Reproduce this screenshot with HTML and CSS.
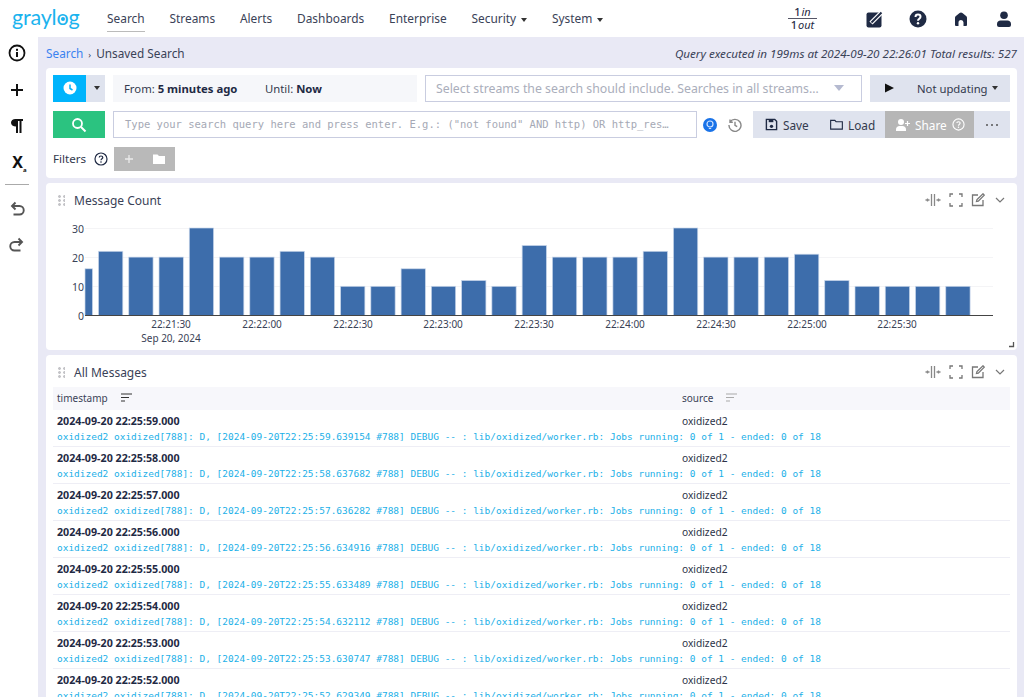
FILE: index.html
```html
<!DOCTYPE html>
<html lang="en">
<head>
<meta charset="utf-8">
<title>Graylog Search</title>
<link rel="stylesheet" href="styles.css">
</head>
<body>
<header class="navbar">
  <div class="logo">gray<span class="logo-l">l</span><span class="logo-o">o</span>g</div>
  <nav class="nav">
    <a class="nav-item active">Search</a>
    <a class="nav-item">Streams</a>
    <a class="nav-item">Alerts</a>
    <a class="nav-item">Dashboards</a>
    <a class="nav-item">Enterprise</a>
    <a class="nav-item drop">Security <i class="caret"></i></a>
    <a class="nav-item drop">System <i class="caret"></i></a>
  </nav>
  <div class="throughput"><div class="tp-top"><b>1</b> <em>in</em></div><div><b>1</b> <em>out</em></div></div>
  <div class="nav-icons">
    <svg class="nav-ic" viewBox="0 0 18 18"><rect x=".5" y="2.500" width="15" height="15" rx="2" fill="#1f2a44"/><path stroke="#fff" stroke-width="4.500" d="M5 13 15 3"/><path stroke="#1f2a44" stroke-width="2" d="M5.500 12.500 15.500 2.500"/></svg>
    <svg class="nav-ic" viewBox="0 0 18 18"><circle cx="9" cy="9" r="8.500" fill="#1f2a44"/><path fill="none" stroke="#fff" stroke-width="2" d="M6.500 7c0-1.500 1.100-2.400 2.500-2.400s2.500.9 2.500 2.200c0 1.900-2.500 1.900-2.500 3.900"/><circle cx="9" cy="13.300" r="1.200" fill="#fff"/></svg>
    <svg class="nav-ic" viewBox="0 0 18 18"><path fill="#1f2a44" d="M9 2.500c.6 0 1 .3 1.400.6l4 3.200c.4.400.6.800.6 1.400V15a1 1 0 0 1-1 1h-2.500v-3.500a2.500 2.500 0 0 0-5 0V16H4a1 1 0 0 1-1-1V7.700c0-.6.200-1 .6-1.400l4-3.200c.4-.3.800-.6 1.400-.6z"/></svg>
    <svg class="nav-ic" viewBox="0 0 18 18"><circle cx="9" cy="5.300" r="3.800" fill="#1f2a44"/><path fill="#1f2a44" d="M2 15v-1c0-2 1.500-3.500 3.500-3.500h7c2 0 3.500 1.500 3.500 3.500v1a2 2 0 0 1-2 2H4a2 2 0 0 1-2-2z"/></svg>
  </div>
</header>
<div class="app">
  <aside class="sidebar">
    <svg class="side-ic" viewBox="0 0 18 18"><circle cx="9" cy="9" r="7.500" fill="none" stroke="#111" stroke-width="1.800"/><rect x="8" y="8" width="2" height="5" fill="#111"/><rect x="8" y="4.800" width="2" height="2" fill="#111"/></svg>
    <svg class="side-ic" viewBox="0 0 18 18"><path stroke="#111" stroke-width="2" d="M9 3v12M3 9h12"/></svg>
    <svg class="side-ic" viewBox="0 0 18 18"><path fill="#111" d="M7.500 2H15v2h-1.500v12h-2V4H10v12H8v-6.500c-3 0-5-1.500-5-3.800S4.800 2 7.500 2z"/></svg>
    <div class="side-x">X<sub>a</sub></div>
    <div class="side-sep"></div>
    <svg class="side-ic hist" viewBox="0 0 18 18"><path fill="none" stroke="#555" stroke-width="1.900" d="M7.500 2.500 4 6l3.500 3.500M4 6h7.500a4 4 0 0 1 0 8.500H5.500"/></svg>
    <svg class="side-ic hist" viewBox="0 0 18 18"><path fill="none" stroke="#555" stroke-width="1.900" d="M10.500 2.500 14 6l-3.500 3.500M14 6H6.500a4 4 0 0 0 0 8.500h6"/></svg>
  </aside>
  <main class="content">
    <div class="crumbs">
      <div><a class="crumb-link">Search</a><span class="crumb-sep">›</span><span>Unsaved Search</span></div>
      <div class="exec">Query executed in 199ms at 2024-09-20 22:26:01 Total results: 527</div>
    </div>
    <section class="card search-card">
      <div class="row">
        <div class="time-btn">
          <span class="time-main"><svg class="ic14" viewBox="0 0 14 14"><circle cx="7" cy="7" r="6.500" fill="#fff"/><path fill="none" stroke="#00b4fc" stroke-width="1.500" d="M7 3.500V7.500l2.500 1.500"/></svg></span>
          <span class="time-drop"><i class="caret"></i></span>
        </div>
        <div class="range"><span class="from">From: <b>5 minutes ago</b></span><span>Until: <b>Now</b></span></div>
        <div class="streams"><span>Select streams the search should include. Searches in all streams…</span><i class="caret-big"></i></div>
        <div class="refresh"><svg class="play" viewBox="0 0 9 10"><path fill="#111" d="M0 .5 9 5 0 9.500z"/></svg><span>Not updating</span><i class="caret"></i></div>
      </div>
      <div class="row">
        <div class="go"><svg class="ic16" viewBox="0 0 16 16"><circle cx="6.500" cy="6.500" r="4.500" fill="none" stroke="#fff" stroke-width="1.800"/><path stroke="#fff" stroke-width="2" d="M10 10l4.500 4.500"/></svg></div>
        <div class="query">Type your search query here and press enter. E.g.: ("not found" AND http) OR http_res…</div>
        <div class="query-ics">
          <svg class="ic14" viewBox="0 0 14 14"><circle cx="7" cy="7" r="7" fill="#1a73e8"/><circle cx="7" cy="6" r="3" fill="none" stroke="#cfe3ff" stroke-width="1.200"/><path stroke="#cfe3ff" d="M5.800 10.500h2.400"/></svg>
          <svg class="ic14" viewBox="0 0 14 14"><path fill="none" stroke="#888" stroke-width="1.400" d="M2 4a6 6 0 1 1-1 3M2 1.500V4.300h2.800M7 3.800V7.300l2.200 1.400"/></svg>
        </div>
        <div class="actions">
          <span class="act act-save"><svg class="ic13" viewBox="0 0 14 14"><path fill="none" stroke="#1f2a44" stroke-width="1.500" d="M1.500 1.500h9l2 2v9h-11z"/><rect x="4" y="2" width="5" height="2.500" fill="#1f2a44"/><circle cx="7" cy="9" r="1.800" fill="#1f2a44"/></svg>Save</span>
          <span class="act act-load"><svg class="ic13" viewBox="0 0 14 14"><path fill="none" stroke="#1f2a44" stroke-width="1.200" d="M.7 2.500h4.500l1.300 1.500h6.800v8H.7z"/></svg>Load</span>
          <span class="act act-share"><svg class="ic14" viewBox="0 0 14 14"><circle cx="5" cy="4" r="3" fill="#fff"/><path fill="#fff" d="M0 13v-1.500C0 9.500 1.500 8 3.500 8h3C8.500 8 10 9.500 10 11.500V13z"/><path stroke="#fff" stroke-width="1.200" d="M11.500 3v5M9 5.500h5"/></svg>Share<svg class="ic13" viewBox="0 0 14 14"><circle cx="7" cy="7" r="6" fill="none" stroke="#fff" stroke-width="1.200"/><path fill="none" stroke="#fff" stroke-width="1.200" d="M5.200 5.500C5.200 4.500 6 4 7 4s1.800.5 1.800 1.500C8.800 6.800 7 6.800 7 8.300"/><circle cx="7" cy="10" r=".8" fill="#fff"/></svg></span>
          <span class="act act-more"><svg class="ic14" viewBox="0 0 14 14"><circle cx="2" cy="7" r="1" fill="#555"/><circle cx="7" cy="7" r="1" fill="#555"/><circle cx="12" cy="7" r="1" fill="#555"/></svg></span>
        </div>
      </div>
      <div class="row filters">
        <span class="filters-label">Filters</span>
        <svg class="ic14" viewBox="0 0 14 14"><circle cx="7" cy="7" r="6" fill="none" stroke="#1f2a44" stroke-width="1.200"/><path fill="none" stroke="#1f2a44" stroke-width="1.200" d="M5.200 5.500C5.200 4.500 6 4 7 4s1.800.5 1.800 1.500C8.800 6.800 7 6.800 7 8.300"/><circle cx="7" cy="10" r=".8" fill="#1f2a44"/></svg>
        <div class="filter-btns">
          <svg class="ic12" viewBox="0 0 12 12"><path stroke="#fff" stroke-opacity=".7" stroke-width="1.300" d="M6 2v8M2 6h8"/></svg>
          <svg class="ic12" viewBox="0 0 12 12"><path fill="#fff" d="M0 1.500h4.500L6 3h6v8H0z"/></svg>
        </div>
      </div>
    </section>
    <section class="card chart-card">
      <div class="widget-head">
        <span class="grip"></span><span class="widget-title">Message Count</span>
        <div class="widget-ics">
          <svg class="wi wi-c" viewBox="0 0 16 12"><path fill="none" stroke="#888" stroke-width="1.300" d="M6.500 0v12M9.500 0v12M.5 6h4M11.500 6h4M2.500 4.500v3M13.500 4.500v3"/></svg>
          <svg class="wi" viewBox="0 0 14 14"><path fill="none" stroke="#777" stroke-width="1.300" d="M1 4V1h3M10 1h3v3M13 10v3h-3M4 13H1v-3"/></svg>
          <svg class="wi" viewBox="0 0 14 14"><path fill="none" stroke="#777" stroke-width="1.300" d="M7 2H1.500v10.500H12V7M5.500 8.500l.5-2L12 .8l1.300 1.300-6 6z"/></svg>
          <svg class="wi wi-s" viewBox="0 0 12 12"><path fill="none" stroke="#777" stroke-width="1.200" d="M2 4l4 4 4-4"/></svg>
        </div>
      </div>
      <svg class="chart" viewBox="46 216 971 134" width="971" height="134">
        <g class="grid"><path d="M85 228.500H993M85 257.500H993M85 286.500H993"/></g>
        <g class="bars">
          <rect x="85" y="268.800" width="7.500" height="46.700"/>
          <rect x="98.500" y="251.300" width="24.300" height="64.200"/>
          <rect x="128.760" y="257.100" width="24.300" height="58.400"/>
          <rect x="159.020" y="257.100" width="24.300" height="58.400"/>
          <rect x="189.280" y="228" width="24.300" height="87.500"/>
          <rect x="219.540" y="257.100" width="24.300" height="58.400"/>
          <rect x="249.800" y="257.100" width="24.300" height="58.400"/>
          <rect x="280.060" y="251.300" width="24.300" height="64.200"/>
          <rect x="310.320" y="257.100" width="24.300" height="58.400"/>
          <rect x="340.580" y="286.300" width="24.300" height="29.200"/>
          <rect x="370.840" y="286.300" width="24.300" height="29.200"/>
          <rect x="401.100" y="268.800" width="24.300" height="46.700"/>
          <rect x="431.360" y="286.300" width="24.300" height="29.200"/>
          <rect x="461.620" y="280.500" width="24.300" height="35"/>
          <rect x="491.880" y="286.300" width="24.300" height="29.200"/>
          <rect x="522.140" y="245.500" width="24.300" height="70"/>
          <rect x="552.400" y="257.100" width="24.300" height="58.400"/>
          <rect x="582.660" y="257.100" width="24.300" height="58.400"/>
          <rect x="612.920" y="257.100" width="24.300" height="58.400"/>
          <rect x="643.180" y="251.300" width="24.300" height="64.200"/>
          <rect x="673.440" y="228" width="24.300" height="87.500"/>
          <rect x="703.700" y="257.100" width="24.300" height="58.400"/>
          <rect x="733.960" y="257.100" width="24.300" height="58.400"/>
          <rect x="764.220" y="257.100" width="24.300" height="58.400"/>
          <rect x="794.480" y="254.200" width="24.300" height="61.300"/>
          <rect x="824.740" y="280.500" width="24.300" height="35"/>
          <rect x="855" y="286.300" width="24.300" height="29.200"/>
          <rect x="885.260" y="286.300" width="24.300" height="29.200"/>
          <rect x="915.520" y="286.300" width="24.300" height="29.200"/>
          <rect x="945.780" y="286.300" width="24.300" height="29.200"/>
        </g>
        <path class="axis" d="M85 315.500H993"/>
        <g class="ylab">
          <text x="85" y="232.500">30</text><text x="85" y="261.500">20</text><text x="85" y="290.500">10</text><text x="85" y="319.500">0</text>
        </g>
        <g class="xlab">
          <text x="171" y="328">22:21:30</text><text x="262" y="328">22:22:00</text><text x="353" y="328">22:22:30</text><text x="443" y="328">22:23:00</text><text x="534" y="328">22:23:30</text><text x="625" y="328">22:24:00</text><text x="716" y="328">22:24:30</text><text x="807" y="328">22:25:00</text><text x="897" y="328">22:25:30</text>
          <text x="171" y="342">Sep 20, 2024</text>
        </g>
        <path class="resize" d="M1009 346.500h4.500v-4.500"/>
      </svg>
    </section>
    <section class="card msg-card">
      <div class="widget-head">
        <span class="grip"></span><span class="widget-title">All Messages</span>
        <div class="widget-ics">
          <svg class="wi wi-c" viewBox="0 0 16 12"><path fill="none" stroke="#888" stroke-width="1.300" d="M6.500 0v12M9.500 0v12M.5 6h4M11.500 6h4M2.500 4.500v3M13.500 4.500v3"/></svg>
          <svg class="wi" viewBox="0 0 14 14"><path fill="none" stroke="#777" stroke-width="1.300" d="M1 4V1h3M10 1h3v3M13 10v3h-3M4 13H1v-3"/></svg>
          <svg class="wi" viewBox="0 0 14 14"><path fill="none" stroke="#777" stroke-width="1.300" d="M7 2H1.500v10.500H12V7M5.500 8.500l.5-2L12 .8l1.300 1.300-6 6z"/></svg>
          <svg class="wi wi-s" viewBox="0 0 12 12"><path fill="none" stroke="#777" stroke-width="1.200" d="M2 4l4 4 4-4"/></svg>
        </div>
      </div>
      <div class="table">
        <div class="thead">
          <span class="th-ts">timestamp<svg class="sort" viewBox="0 0 12 10"><path stroke="#333" stroke-width="1.200" d="M0 1h11M0 4.500h8M0 8h4"/></svg></span>
          <span>source<svg class="sort" viewBox="0 0 12 10"><path stroke="#aaa" stroke-width="1.200" d="M0 1h11M0 4.500h8M0 8h4"/></svg></span>
        </div>
        <div class="msg"><div class="m-top"><b>2024-09-20 22:25:59.000</b><span>oxidized2</span></div><div class="m-body">oxidized2 oxidized[788]: D, [2024-09-20T22:25:59.639154 #788] DEBUG -- : lib/oxidized/worker.rb: Jobs running: 0 of 1 - ended: 0 of 18</div></div>
        <div class="msg"><div class="m-top"><b>2024-09-20 22:25:58.000</b><span>oxidized2</span></div><div class="m-body">oxidized2 oxidized[788]: D, [2024-09-20T22:25:58.637682 #788] DEBUG -- : lib/oxidized/worker.rb: Jobs running: 0 of 1 - ended: 0 of 18</div></div>
        <div class="msg"><div class="m-top"><b>2024-09-20 22:25:57.000</b><span>oxidized2</span></div><div class="m-body">oxidized2 oxidized[788]: D, [2024-09-20T22:25:57.636282 #788] DEBUG -- : lib/oxidized/worker.rb: Jobs running: 0 of 1 - ended: 0 of 18</div></div>
        <div class="msg"><div class="m-top"><b>2024-09-20 22:25:56.000</b><span>oxidized2</span></div><div class="m-body">oxidized2 oxidized[788]: D, [2024-09-20T22:25:56.634916 #788] DEBUG -- : lib/oxidized/worker.rb: Jobs running: 0 of 1 - ended: 0 of 18</div></div>
        <div class="msg"><div class="m-top"><b>2024-09-20 22:25:55.000</b><span>oxidized2</span></div><div class="m-body">oxidized2 oxidized[788]: D, [2024-09-20T22:25:55.633489 #788] DEBUG -- : lib/oxidized/worker.rb: Jobs running: 0 of 1 - ended: 0 of 18</div></div>
        <div class="msg"><div class="m-top"><b>2024-09-20 22:25:54.000</b><span>oxidized2</span></div><div class="m-body">oxidized2 oxidized[788]: D, [2024-09-20T22:25:54.632112 #788] DEBUG -- : lib/oxidized/worker.rb: Jobs running: 0 of 1 - ended: 0 of 18</div></div>
        <div class="msg"><div class="m-top"><b>2024-09-20 22:25:53.000</b><span>oxidized2</span></div><div class="m-body">oxidized2 oxidized[788]: D, [2024-09-20T22:25:53.630747 #788] DEBUG -- : lib/oxidized/worker.rb: Jobs running: 0 of 1 - ended: 0 of 18</div></div>
        <div class="msg"><div class="m-top"><b>2024-09-20 22:25:52.000</b><span>oxidized2</span></div><div class="m-body">oxidized2 oxidized[788]: D, [2024-09-20T22:25:52.629349 #788] DEBUG -- : lib/oxidized/worker.rb: Jobs running: 0 of 1 - ended: 0 of 18</div></div>
      </div>
    </section>
  </main>
</div>
</body>
</html>
```
FILE: styles.css
```css
* { box-sizing: border-box; }
html, body { margin: 0; height: 697px; overflow: hidden; }
body { font-family: "Noto Sans", sans-serif; font-size: 12px; color: #1f2a44; background: #fff; }
svg { display: block; flex: none; }

.navbar { height: 37px; display: flex; align-items: center; background: #fff; padding: 0 11px 0 12px; }
.logo { width: 95px; font-family: "Lato", sans-serif; font-size: 21.500px; line-height: 30px; letter-spacing: -.2px; color: #1bb3ee; margin-top: -3px; }
.logo-o { position: relative; }
.logo-o::after { content: ""; position: absolute; left: 5px; top: 13px; width: 4px; height: 4px; border-radius: 50%; background: #1bb3ee; }
.nav { display: flex; gap: 24.800px; font-size: 11.900px; color: #3a4257; }
.nav-item { line-height: 26px; border-bottom: 1px solid transparent; white-space: nowrap; }
.nav-item.active { border-bottom: 1px solid #bbb; }
.caret { display: inline-block; border: 3.500px solid transparent; border-top: 4px solid #333; border-bottom: 0; vertical-align: middle; margin-left: 2px; }
.throughput { margin-left: auto; width: 29px; font-size: 11px; line-height: 12px; text-align: center; color: #1f2a44; word-spacing: -2px; }
.throughput b { font-weight: 500; }
.throughput em { font-style: italic; }
.tp-top { border-bottom: 1px solid #556; }
.nav-icons { margin-left: 49px; display: flex; gap: 25px; }
.nav-ic { width: 18px; height: 18px; }

.app { display: flex; height: 660px; }
.sidebar { width: 38px; flex: none; background: #fff; display: flex; flex-direction: column; align-items: center; padding: 7px 4px 0 0; color: #111; }
.side-ic { width: 18px; height: 18px; margin-bottom: 18.500px; }
.side-x { font-size: 16px; font-weight: 700; line-height: 18px; height: 18px; margin: -1px 0 13px 5px; color: #111; }
.side-x sub { font-size: 6px; }
.side-sep { width: 24px; height: 1px; background: #aaa; margin-bottom: 15px; }
.side-ic.hist { margin-bottom: 18.500px; }

.content { flex: 1; background: #e9e9f5; padding: 0 7px 0 8px; overflow: hidden; }
.crumbs { height: 31px; padding-top: 1px; display: flex; justify-content: space-between; align-items: center; font-size: 11.800px; color: #3a4257; }
.crumb-link { color: #3b82f0; }
.crumb-sep { margin: 0 5px; font-size: 9px; }
.exec { font-style: italic; font-size: 11.640px; }

.card { background: #fff; border-radius: 4px; margin-bottom: 5px; }
.search-card { height: 110px; padding: 6.500px 7px 0; }
.row { display: flex; height: 27px; margin-bottom: 9.500px; }
.time-btn { display: flex; width: 52px; flex: none; }
.time-main { width: 33px; background: #00b4fc; display: flex; align-items: center; justify-content: center; }
.time-drop { width: 19px; background: #dfe3ee; display: flex; align-items: center; justify-content: center; }
.range { width: 304px; margin-left: 8px; flex: none; background: #f6f7fa; display: flex; align-items: center; padding-left: 11px; font-size: 11.300px; color: #333a4d; }
.range b { color: #1f2a44; }
.from { width: 141px; }
.streams { width: 437px; margin-left: 8px; flex: none; border: 1px solid #c9cde0; display: flex; align-items: center; justify-content: space-between; padding: 0 17px 0 10px; color: #aaaebb; font-size: 12.300px; white-space: nowrap; }
.caret-big { border: 5px solid transparent; border-top: 6px solid #b5bad0; border-bottom: 0; }
.refresh { width: 140px; margin-left: 8px; flex: none; background: #dfe3ee; display: flex; align-items: center; padding: 0 11px 0 15px; font-size: 11.300px; color: #333a4d; }
.refresh .caret { margin-left: 4px; }
.play { width: 9px; height: 10px; margin-right: 23px; }
.go { width: 52px; flex: none; background: #2bc380; display: flex; align-items: center; justify-content: center; }
.query { width: 584px; flex: none; margin-left: 8px; border: 1px solid #c9cde0; padding: 0 11px; line-height: 25px; font-family: "DejaVu Sans Mono", monospace; font-size: 10.500px; color: #a5a9b5; white-space: nowrap; overflow: hidden; }
.query-ics { width: 56px; flex: none; display: flex; align-items: center; gap: 11px; padding-left: 6px; }
.actions { display: flex; flex: none; width: 257px; font-size: 11.800px; color: #333a4d; }
.act { display: flex; align-items: center; gap: 5px; background: #dfe3ee; }
.act-save { width: 65px; padding-left: 12px; }
.act-load { width: 67px; padding-left: 12px; }
.act-share { width: 89px; padding-left: 11px; background: #b6b6b6; color: #fff; }
.act-more { width: 36px; justify-content: center; }
.ic12 { width: 12px; height: 12px; }
.ic13 { width: 13px; height: 13px; }
.ic14 { width: 14px; height: 14px; }
.ic16 { width: 16px; height: 16px; }
.filters { align-items: center; height: 24px; margin: -1px 0 0; }
.filters-label { font-size: 11.600px; color: #333a4d; margin-right: 8px; }
.filter-btns { margin-left: 5.500px; width: 61px; height: 24px; background: #b9b9b9; display: flex; align-items: center; gap: 18px; padding-left: 9px; }

.widget-head { height: 33px; display: flex; align-items: center; padding: 1px 11px 0 12px; }
.grip { width: 7px; height: 11px; margin-right: 5px; background: radial-gradient(circle at 1.500px 1.500px, #c4c4c8 1.300px, transparent 1.500px) 0 0 / 5px 4px; }
.widget-title { font-size: 12px; color: #3a4257; margin-left: 4px; }
.widget-ics { margin-left: auto; display: flex; align-items: center; gap: 8px; }
.wi { width: 14px; height: 14px; }
.wi-c { width: 16px; height: 12px; }
.wi-s { width: 12px; height: 12px; margin-left: 1px; }
.chart-card { height: 167px; overflow: hidden; }
.chart { margin: 0; }
.grid path { stroke: #f4f4f6; fill: none; }
.bars rect { fill: #3d6dab; stroke: #c8d6ea; stroke-width: .7px; }
.axis { stroke: #444; fill: none; }
.ylab text { font-size: 10.500px; text-anchor: end; fill: #3a4257; font-family: "Noto Sans", sans-serif; transform: translateX(-1px); }
.xlab text { font-size: 10px; text-anchor: middle; fill: #3a4257; font-family: "Noto Sans", sans-serif; }
.resize { stroke: #555; fill: none; stroke-width: 1.300px; }

.msg-card { height: 400px; }
.table { margin: 0 7px; }
.thead { height: 23px; background: #f7f7fb; display: grid; grid-template-columns: 625px 1fr; align-items: center; padding: 0 0 2px 4px; font-size: 10px; color: #3a4257; margin-top: -1px; }
.thead span { display: flex; align-items: center; }
.sort { width: 12px; height: 10px; margin-left: 13px; }
.msg { height: 37px; padding: 4px 4px 0; border-bottom: 1px solid #eeeef5; }
.m-top { display: grid; grid-template-columns: 625px 1fr; font-size: 10.200px; line-height: 15px; color: #2c3347; }
.m-top b { font-size: 10.700px; font-weight: 700; color: #1f2a44; }
.m-body { font-family: "DejaVu Sans Mono", monospace; font-size: 9.470px; line-height: 16px; color: #1bb0e8; white-space: nowrap; }
```
